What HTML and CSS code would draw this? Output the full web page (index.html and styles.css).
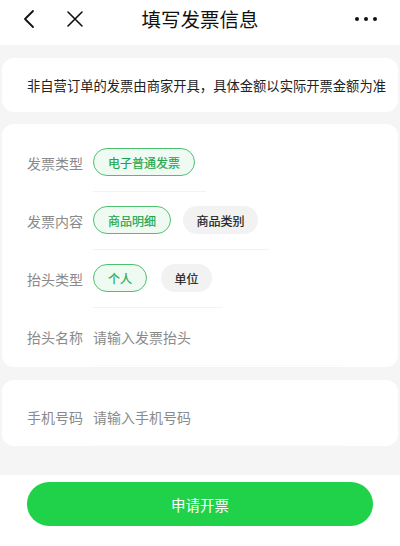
FILE: index.html
```html
<!DOCTYPE html>
<html lang="zh-CN">
<head>
<meta charset="utf-8">
<title>填写发票信息</title>
<link rel="stylesheet" href="styles.css">
</head>
<body>
<div class="page">
  <header class="header">
    <div class="nav-left">
      <svg class="icon back" width="14" height="20" viewBox="0 0 14 20"><path d="M11 2 L3 10 L11 18" fill="none" stroke="#111" stroke-width="1.8" stroke-linecap="round" stroke-linejoin="round"/></svg>
      <svg class="icon close" width="18" height="18" viewBox="0 0 18 18"><path d="M2 2 L16 16 M16 2 L2 16" fill="none" stroke="#111" stroke-width="1.6" stroke-linecap="round"/></svg>
    </div>
    <h1 class="title">填写发票信息</h1>
    <div class="nav-right">
      <svg class="icon more" width="24" height="6" viewBox="0 0 24 6"><circle cx="3" cy="3" r="2" fill="#111"/><circle cx="12" cy="3" r="2" fill="#111"/><circle cx="21" cy="3" r="2" fill="#111"/></svg>
    </div>
  </header>

  <main class="main">
    <section class="card notice">非自营订单的发票由商家开具，具体金额以实际开票金额为准</section>

    <section class="card form">
      <div class="row">
        <span class="label">发票类型</span>
        <div class="options">
          <span class="chip active">电子普通发票</span>
        </div>
      </div>
      <div class="row">
        <span class="label">发票内容</span>
        <div class="options">
          <span class="chip active">商品明细</span>
          <span class="chip">商品类别</span>
        </div>
      </div>
      <div class="row">
        <span class="label">抬头类型</span>
        <div class="options gap-wide">
          <span class="chip active">个人</span>
          <span class="chip">单位</span>
        </div>
      </div>
      <div class="row">
        <span class="label">抬头名称</span>
        <div class="input">请输入发票抬头</div>
      </div>
    </section>

    <section class="card phone">
      <div class="row">
        <span class="label">手机号码</span>
        <div class="input">请输入手机号码</div>
      </div>
    </section>
  </main>

  <footer class="footer">
    <button class="submit">申请开票</button>
  </footer>
</div>
</body>
</html>
```

FILE: styles.css
```css
* { box-sizing: border-box; }
html, body {
  margin: 0;
  padding: 0;
  background: #fff;
}
body {
  font-family: "Noto Sans CJK SC", "Noto Sans", sans-serif;
  color: #222;
}
.page {
  width: 400px;
  height: 546px;
  overflow: hidden;
}
.header {
  height: 45px;
  display: grid;
  grid-template-columns: 1fr auto 1fr;
  align-items: center;
  background: #fff;
}
.nav-left {
  display: flex;
  align-items: center;
  padding-left: 22px;
  gap: 30px;
  margin-top: -8px;
}
.nav-right {
  display: flex;
  justify-content: flex-end;
  padding-right: 22px;
  margin-top: -8px;
}
.icon { display: block; }
.title {
  margin: -8px 0 0;
  font-size: 19.5px;
  font-weight: 400;
  color: #111;
  line-height: 26px;
}
.main {
  background: #f5f5f5;
  padding: 13px 2px 29px;
  display: flex;
  flex-direction: column;
  gap: 12px;
}
.card {
  background: #fff;
  border-radius: 12px;
}
.notice {
  height: 54px;
  display: flex;
  align-items: center;
  padding-left: 25px;
  font-size: 13.3px;
  color: #222;
  white-space: nowrap;
}
.form {
  padding: 10px 0 1px;
}
.phone {
  margin-top: 1px;
  padding: 8px 0 0;
}
.row {
  display: flex;
  align-items: stretch;
  padding-left: 25px;
}
.label {
  width: 56px;
  margin-right: 10px;
  font-size: 14px;
  color: #8a8a8a;
  display: flex;
  align-items: center;
  white-space: nowrap;
}
.options {
  display: flex;
  align-items: center;
  gap: 12px;
  padding: 14px 11px 15px 0;
  border-bottom: 1px solid #f3f3f3;
}
.options.gap-wide { gap: 14px; }
.chip {
  height: 28px;
  padding: 0 13.5px;
  border-radius: 14px;
  display: inline-flex;
  align-items: center;
  font-size: 12px;
  font-weight: 400;
  color: #1a1a1a;
  background: #f2f2f2;
  white-space: nowrap;
  -webkit-text-stroke: 0.2px currentColor;
}
.chip.active {
  padding: 0 14px;
  background: #effbf2;
  border: 1px solid #4cc270;
  color: #1ea64c;
}
.input {
  width: 250px;
  height: 58px;
  display: flex;
  align-items: center;
  font-size: 14px;
  color: #8a8a8a;
  border-bottom: 1px solid #fafafa;
}
.footer {
  padding: 7px 27px 0;
}
.submit {
  width: 100%;
  height: 44px;
  border: none;
  border-radius: 22px;
  background: #20d14a;
  color: #fff;
  font-family: "Noto Sans CJK SC", "Noto Sans", sans-serif;
  font-size: 14.5px;
  font-weight: 400;
}
```
